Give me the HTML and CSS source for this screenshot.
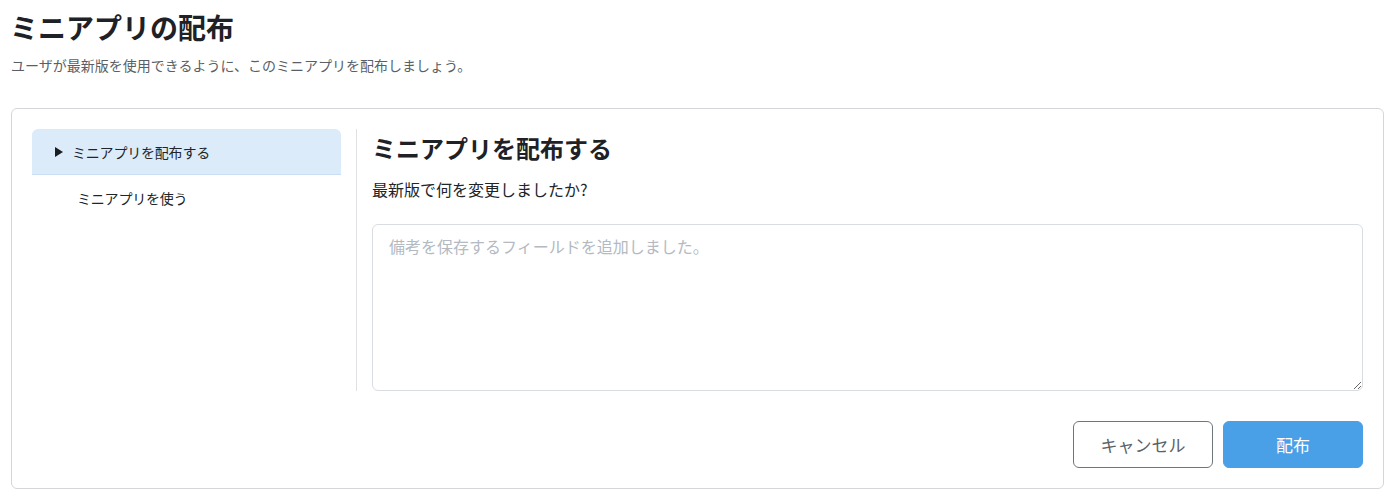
FILE: index.html
```html
<!DOCTYPE html>
<html lang="ja">
<head>
<meta charset="utf-8">
<link rel="stylesheet" href="styles.css">
</head>
<body>
<header class="page-head">
  <h1 class="page-title">ミニアプリの配布</h1>
  <p class="page-desc">ユーザが最新版を使用できるように、このミニアプリを配布しましょう。</p>
</header>
<section class="card">
  <div class="card-body">
    <nav class="side-nav">
      <div class="nav-item active"><span class="caret"></span>ミニアプリを配布する</div>
      <div class="nav-item">ミニアプリを使う</div>
    </nav>
    <div class="divider"></div>
    <div class="content">
      <h2 class="content-title">ミニアプリを配布する</h2>
      <label class="question" for="notes">最新版で何を変更しましたか?</label>
      <textarea id="notes" class="notes" placeholder="備考を保存するフィールドを追加しました。"></textarea>
    </div>
  </div>
  <div class="card-foot">
    <button class="btn btn-cancel">キャンセル</button>
    <button class="btn btn-primary">配布</button>
  </div>
</section>
</body>
</html>
```
FILE: styles.css
```css
* { box-sizing: border-box; }
body {
  margin: 0;
  padding: 0 8px 0 11px;
  font-family: "Noto Sans CJK JP", "Noto Sans", sans-serif;
  color: #212529;
  background: #fff;
}
.page-head { padding-top: 7px; }
.page-title {
  margin: 0 0 0 -1px;
  font-size: 28px;
  line-height: 40px;
  font-weight: 700;
  color: #1e2125;
}
.page-desc {
  margin: 8px 0 0 0;
  font-size: 14px;
  line-height: 20px;
  color: #5a5f66;
}
.card {
  margin-top: 33px;
  width: 1373px;
  border: 1px solid #d4d6d9;
  border-radius: 6px;
  padding: 20px;
}
.card-body {
  display: flex;
  gap: 15px;
}
.side-nav {
  width: 309px;
  flex: none;
}
.nav-item {
  height: 46px;
  display: flex;
  align-items: center;
  padding-left: 45px;
  font-size: 14px;
  color: #212529;
  letter-spacing: -0.2px;
}
.nav-item.active {
  background: #dbebfa;
  border-radius: 6px 6px 0 0;
  border-bottom: 1px solid #c9def3;
  padding-left: 23px;
}
.caret {
  width: 0;
  height: 0;
  border-top: 5.5px solid transparent;
  border-bottom: 5.5px solid transparent;
  border-left: 8px solid #1b1e21;
  margin-right: 9px;
}
.divider {
  width: 1px;
  background: #dfe1e4;
  flex: none;
}
.content {
  flex: 1;
  display: flex;
  flex-direction: column;
}
.content-title {
  margin: 0;
  font-size: 24px;
  line-height: 38px;
  font-weight: 700;
  color: #1e2125;
}
.question {
  margin-top: 10px;
  font-size: 16px;
  line-height: 24px;
  color: #212529;
}
.notes {
  margin-top: 23px;
  height: 167px;
  width: 100%;
  border: 1px solid #d9dde2;
  border-radius: 6px;
  padding: 8px 16px;
  font-family: inherit;
  font-size: 16px;
  line-height: 26px;
  resize: vertical;
}
.notes::placeholder { color: #b3bac2; }
.card-foot {
  display: flex;
  justify-content: flex-end;
  gap: 10px;
  margin-top: 30px;
}
.btn {
  width: 140px;
  height: 47px;
  border-radius: 6px;
  font-family: inherit;
  font-size: 17px;
}
.btn-cancel {
  background: #fff;
  border: 1px solid #6f757c;
  color: #5c6168;
}
.btn-primary {
  background: #4aa0e6;
  border: 1px solid #4aa0e6;
  color: #fff;
}
```
